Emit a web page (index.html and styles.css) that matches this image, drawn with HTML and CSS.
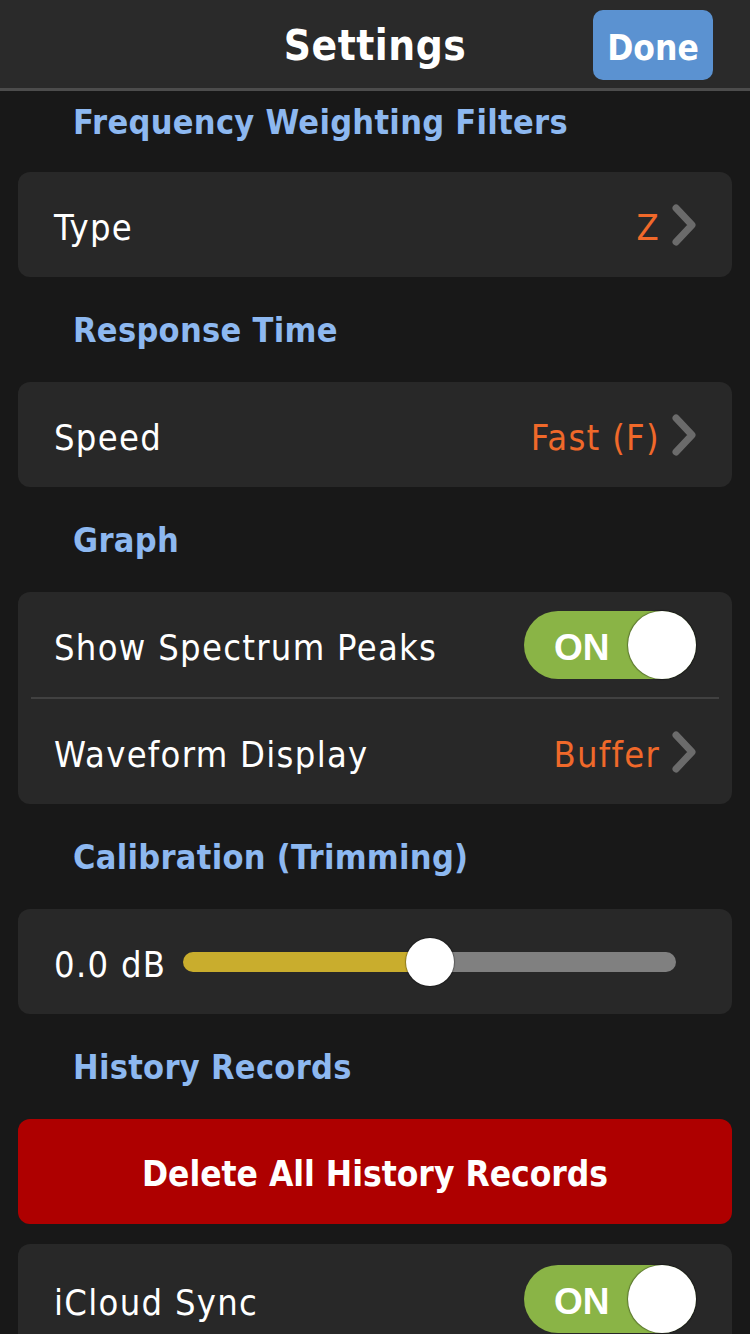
FILE: index.html
```html
<!DOCTYPE html>
<html lang="en">
<head>
<meta charset="utf-8">
<title>Settings</title>
<link rel="stylesheet" href="styles.css">
</head>
<body>
<header class="nav">
  <span></span>
  <h1 class="nav-title">Settings</h1>
  <button class="done-btn">Done</button>
</header>
<main class="content">
  <h2 class="section-title first">Frequency Weighting Filters</h2>
  <div class="card">
    <div class="row">
      <span class="label">Type</span>
      <span class="value">Z</span>
      <svg class="chevron" viewBox="0 0 24 42"><path d="M4 4 L20 21 L4 38"/></svg>
    </div>
  </div>

  <h2 class="section-title">Response Time</h2>
  <div class="card">
    <div class="row">
      <span class="label">Speed</span>
      <span class="value">Fast (F)</span>
      <svg class="chevron" viewBox="0 0 24 42"><path d="M4 4 L20 21 L4 38"/></svg>
    </div>
  </div>

  <h2 class="section-title">Graph</h2>
  <div class="card">
    <div class="row">
      <span class="label">Show Spectrum Peaks</span>
      <span class="toggle"><span class="toggle-text">ON</span><span class="knob"></span></span>
    </div>
    <div class="divider"></div>
    <div class="row">
      <span class="label">Waveform Display</span>
      <span class="value">Buffer</span>
      <svg class="chevron" viewBox="0 0 24 42"><path d="M4 4 L20 21 L4 38"/></svg>
    </div>
  </div>

  <h2 class="section-title">Calibration (Trimming)</h2>
  <div class="card">
    <div class="row slider-row">
      <span class="label slider-label">0.0 dB</span>
      <div class="slider">
        <div class="track-fill"></div>
        <div class="slider-knob"></div>
        <div class="track-rest"></div>
      </div>
    </div>
  </div>

  <h2 class="section-title">History Records</h2>
  <button class="delete-btn">Delete All History Records</button>

  <div class="card icloud">
    <div class="row">
      <span class="label">iCloud Sync</span>
      <span class="toggle"><span class="toggle-text">ON</span><span class="knob"></span></span>
    </div>
  </div>
</main>
</body>
</html>
```
FILE: styles.css
```css
* { box-sizing: border-box; }
html, body {
  margin: 0;
  padding: 0;
  background: #181818;
  width: 750px;
  height: 1334px;
  overflow: hidden;
  font-family: "DejaVu Sans Condensed", "DejaVu Sans", sans-serif;
  color: #fff;
}
.nav {
  height: 91px;
  background: #2a2a2a;
  border-bottom: 3px solid #4c4c4c;
  display: grid;
  grid-template-columns: 1fr auto 1fr;
  align-items: center;
}
.nav-title {
  margin: 0;
  font-size: 42px;
  font-weight: bold;
  color: #fff;
  letter-spacing: 0.5px;
  padding-top: 2px;
}
.done-btn {
  justify-self: end;
  margin-right: 37px;
  width: 120px;
  height: 70px;
  border: none;
  border-radius: 10px;
  background: #5b92d1;
  color: #fff;
  font-family: inherit;
  font-weight: bold;
  font-size: 35px;
  padding: 6px 0 0 0;
  margin-top: 1px;
}
.content {
  padding: 0 18px;
  display: flex;
  flex-direction: column;
}
.section-title {
  margin: 0;
  height: 105px;
  display: flex;
  align-items: center;
  padding-left: 55px;
  font-size: 34px;
  font-weight: bold;
  color: #8db8f0;
  letter-spacing: 0.3px;
}
.section-title.first {
  height: 81px;
  padding-bottom: 20px;
}
.card {
  background: #282828;
  border-radius: 12px;
  display: flex;
  flex-direction: column;
}
.row {
  height: 105px;
  display: flex;
  align-items: center;
  padding: 0 36px 0 36px;
}
.label {
  flex: 1;
  font-size: 36px;
  letter-spacing: 1.3px;
  color: #fff;
  padding-top: 6px;
}
.value {
  font-size: 36px;
  letter-spacing: 1.3px;
  color: #f0692a;
  margin-right: 12px;
  padding-top: 6px;
}
.chevron {
  width: 24px;
  height: 42px;
  fill: none;
  stroke: #6b6b6b;
  stroke-width: 7;
  stroke-linecap: round;
  stroke-linejoin: round;
}
.divider {
  height: 2px;
  background: #414141;
  margin: 0 13px;
}
.toggle {
  width: 172px;
  height: 68px;
  border-radius: 34px;
  background: #8ab446;
  display: flex;
  align-items: center;
  justify-content: space-between;
  padding-left: 30px;
}
.toggle-text {
  font-family: "Liberation Sans", Arial, sans-serif;
  font-weight: bold;
  font-size: 37px;
  color: #fff;
  padding-top: 6px;
}
.knob {
  width: 68px;
  height: 68px;
  border-radius: 50%;
  background: #fff;
  box-shadow: 0 0 1px 1px rgba(0,0,0,0.35);
}
.slider-row {
  padding-right: 56px;
}
.slider-label {
  flex: none;
  width: 129px;
  white-space: nowrap;
}
.slider {
  flex: 1;
  display: flex;
  align-items: center;
  height: 48px;
}
.track-fill {
  width: 247px;
  height: 20px;
  background: #c9ad2d;
  border-radius: 10px 0 0 10px;
}
.track-rest {
  flex: 1;
  height: 20px;
  background: #808080;
  border-radius: 0 10px 10px 0;
}
.slider-knob {
  width: 48px;
  height: 48px;
  border-radius: 50%;
  background: #fff;
  margin: 0 -24px;
  position: relative;
  z-index: 1;
  box-shadow: 0 0 1px 1px rgba(0,0,0,0.3);
}
.delete-btn {
  height: 105px;
  border: none;
  border-radius: 12px;
  background: #ae0000;
  color: #fff;
  font-family: inherit;
  font-weight: bold;
  font-size: 35px;
  padding: 4px 0 0 0;
}
.icloud {
  margin-top: 20px;
}
.icloud .row {
  height: 110px;
}
```
